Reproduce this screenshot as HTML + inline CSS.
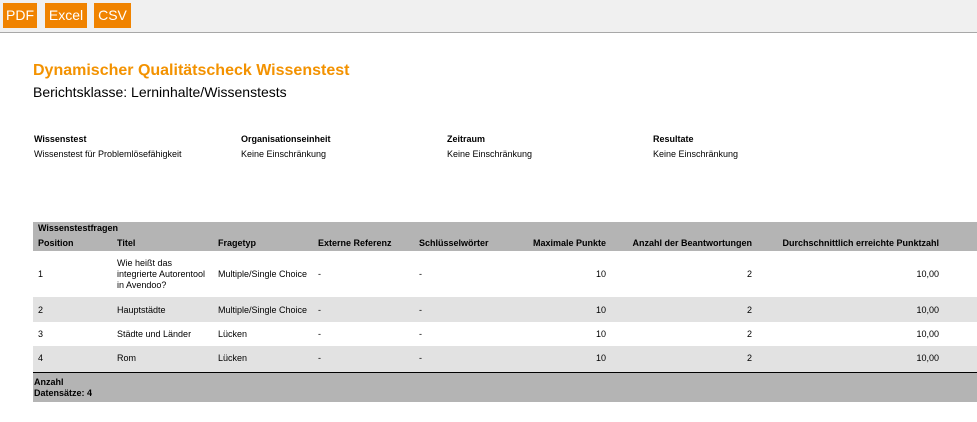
<!DOCTYPE html>
<html><head><meta charset="utf-8"><style>
*{margin:0;padding:0;box-sizing:border-box}
body{width:977px;height:422px;position:relative;background:#fff;font-family:"Liberation Sans",Arial,sans-serif;color:#000;overflow:hidden}
.bar{position:absolute;left:0;top:0;width:977px;height:33px;background:#f0f0f0;border-bottom:1px solid #a8a8a8}
.btn{position:absolute;top:3px;height:25px;background:#f08300;color:#fff;font-size:14px;line-height:25px;text-align:center}
.a{position:absolute;white-space:nowrap}
.t{font-size:9px;line-height:11px}
.b{font-weight:bold}
.r{text-align:right}
.bg{position:absolute;left:33px;width:944px}
</style></head><body>
<div class="bar"></div>
<div class="btn" style="left:3px;width:34px">PDF</div>
<div class="btn" style="left:45px;width:42px">Excel</div>
<div class="btn" style="left:94px;width:37px">CSV</div>
<div class="a b" style="left:33px;top:62px;font-size:16px;color:#f39200">Dynamischer Qualitätscheck Wissenstest</div>
<div class="a" style="left:33px;top:84px;font-size:14px">Berichtsklasse: Lerninhalte/Wissenstests</div>

<div class="a t b" style="left:34px;top:134px">Wissenstest</div>
<div class="a t" style="left:34px;top:149px">Wissenstest für Problemlösefähigkeit</div>
<div class="a t b" style="left:241px;top:134px">Organisationseinheit</div>
<div class="a t" style="left:241px;top:149px">Keine Einschränkung</div>
<div class="a t b" style="left:447px;top:134px">Zeitraum</div>
<div class="a t" style="left:447px;top:149px">Keine Einschränkung</div>
<div class="a t b" style="left:653px;top:134px">Resultate</div>
<div class="a t" style="left:653px;top:149px">Keine Einschränkung</div>

<div class="bg" style="top:222px;height:29px;background:#b4b4b4"></div>
<div class="bg" style="top:297px;height:25px;background:#e2e2e2"></div>
<div class="bg" style="top:346px;height:26px;background:#e2e2e2"></div>
<div class="bg" style="top:372px;height:1px;background:#000"></div>
<div class="bg" style="top:373px;height:29px;background:#b4b4b4"></div>

<div class="a t b" style="left:38px;top:223px">Wissenstestfragen</div>
<div class="a t b" style="left:38px;top:238px">Position</div>
<div class="a t b" style="left:117px;top:238px">Titel</div>
<div class="a t b" style="left:218px;top:238px">Fragetyp</div>
<div class="a t b" style="left:318px;top:238px">Externe Referenz</div>
<div class="a t b" style="left:419px;top:238px">Schlüsselwörter</div>
<div class="a t b r" style="right:371px;top:238px">Maximale Punkte</div>
<div class="a t b r" style="right:225px;top:238px">Anzahl der Beantwortungen</div>
<div class="a t b r" style="right:38px;top:238px">Durchschnittlich erreichte Punktzahl</div>

<div class="a t" style="left:117px;top:258px;line-height:11px;white-space:normal;width:100px">Wie heißt das<br>integrierte Autorentool<br>in Avendoo?</div>

<div class="a t" style="left:38px;top:269px">1</div>
<div class="a t" style="left:218px;top:269px">Multiple/Single Choice</div>
<div class="a t" style="left:318px;top:269px">-</div>
<div class="a t" style="left:419px;top:269px">-</div>
<div class="a t r" style="right:371px;top:269px">10</div>
<div class="a t r" style="right:225px;top:269px">2</div>
<div class="a t r" style="right:38px;top:269px">10,00</div>

<div class="a t" style="left:38px;top:305px">2</div>
<div class="a t" style="left:117px;top:305px">Hauptstädte</div>
<div class="a t" style="left:218px;top:305px">Multiple/Single Choice</div>
<div class="a t" style="left:318px;top:305px">-</div>
<div class="a t" style="left:419px;top:305px">-</div>
<div class="a t r" style="right:371px;top:305px">10</div>
<div class="a t r" style="right:225px;top:305px">2</div>
<div class="a t r" style="right:38px;top:305px">10,00</div>

<div class="a t" style="left:38px;top:329px">3</div>
<div class="a t" style="left:117px;top:329px">Städte und Länder</div>
<div class="a t" style="left:218px;top:329px">Lücken</div>
<div class="a t" style="left:318px;top:329px">-</div>
<div class="a t" style="left:419px;top:329px">-</div>
<div class="a t r" style="right:371px;top:329px">10</div>
<div class="a t r" style="right:225px;top:329px">2</div>
<div class="a t r" style="right:38px;top:329px">10,00</div>

<div class="a t" style="left:38px;top:353px">4</div>
<div class="a t" style="left:117px;top:353px">Rom</div>
<div class="a t" style="left:218px;top:353px">Lücken</div>
<div class="a t" style="left:318px;top:353px">-</div>
<div class="a t" style="left:419px;top:353px">-</div>
<div class="a t r" style="right:371px;top:353px">10</div>
<div class="a t r" style="right:225px;top:353px">2</div>
<div class="a t r" style="right:38px;top:353px">10,00</div>

<div class="a t b" style="left:34px;top:377px">Anzahl<br>Datensätze: 4</div>
</body></html>
